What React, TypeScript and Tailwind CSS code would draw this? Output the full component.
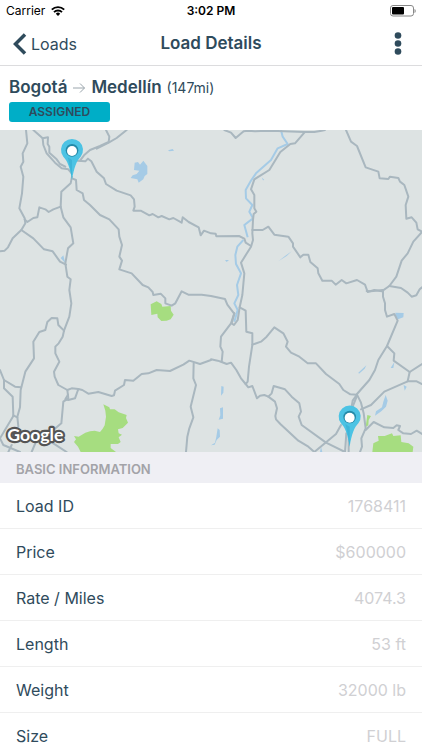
import { useState } from "react";

type Detail = { label: string; value: string };

const details: Detail[] = [
  { label: "Load ID", value: "1768411" },
  { label: "Price", value: "$600000" },
  { label: "Rate / Miles", value: "4074.3" },
  { label: "Length", value: "53 ft" },
  { label: "Weight", value: "32000 lb" },
  { label: "Size", value: "FULL" },
];

const roads = [
  "78,0 82,40 68,70 70,95 62,110 70,140 66,190 58,235 74,265 76,280 64,300 38,325 24,352 14,362 0,364",
  "100,0 128,25 130,45 140,70 165,98 185,115 205,118 215,130",
  "128,25 144,22 143,42 148,50 148,68 170,88 180,102 196,110",
  "318,0 328,20 326,36 300,48 270,60 252,76 240,92",
  "380,0 350,24 326,38 290,56",
  "232,92 256,94 264,86 274,94 290,125 312,145 318,162 350,182 392,196 402,208 404,230 400,242 422,242 448,256 458,252 475,262 485,258 508,268 520,264 545,278 548,262 566,276 596,292 602,316 612,302 633,310 647,311 649,319 717,318 733,326 737,338 753,348",
  "216,140 212,160 184,185 182,230 190,262 212,292 220,340 204,355 196,400 202,440 212,448 208,480 214,520 208,560 192,602",
  "218,146 228,150 230,180 248,190 252,210 270,225 300,255 328,268 356,298 358,320 366,345 358,380 366,392 358,418 395,430 428,465 445,472 458,486 460,495 482,491 496,505 496,520 515,527 526,520 545,484 565,494 605,494 633,498 675,507 682,524 702,550",
  "74,268 82,276 100,264 112,262 118,232 136,238 146,246 160,238 182,230",
  "64,300 100,325 132,358 158,364 180,395 198,404",
  "673,0 693,8 707,24 731,4 745,2 765,4 800,2 833,3 913,6 943,6 965,2 975,0",
  "913,8 885,40 871,42 841,66 808,120 763,148 753,178 763,195 763,235 769,245 761,252 759,270 757,310 759,330 753,350 723,398 733,430 727,495 719,532 737,542 739,605 757,610 757,645 747,710 743,755 737,762",
  "719,532 713,570 702,585 695,580 703,550",
  "703,550 693,580 663,620 661,650 668,665 665,696",
  "757,300 788,300 805,290 823,314 865,320 879,340 879,350 901,382 910,374 925,374 931,396 953,415 955,430 967,452 995,452 1007,464 1025,450 1039,460 1071,450 1095,464 1103,486 1123,480 1145,484 1168,468 1189,440 1205,392 1223,370 1240,335 1266,306",
  "1038,0 1053,35 1071,48 1097,112 1135,125 1139,145 1165,147 1170,140 1195,144 1200,155 1213,165 1225,200 1217,225 1219,266 1235,262 1249,278 1253,298 1266,305",
  "1168,468 1203,474 1223,488 1235,500 1249,496 1259,478 1266,472",
  "1100,483 1112,484 1149,480 1149,500 1155,520 1155,540 1161,560 1183,552 1193,572 1161,648 1135,690 1125,720 1108,750 1071,792",
  "1161,648 1183,670 1181,692 1229,726 1223,754",
  "1229,726 1266,702",
  "1266,762 1250,754 1223,754 1153,785 1113,825 1083,838",
  "757,644 783,635 800,620 823,592 850,610 863,635 858,650 873,668 898,680 923,700 948,700 978,732 1018,762 1030,780 1051,793 1071,794 1083,818 1091,850 1097,895 1084,925 1086,950 1080,966",
  "1071,794 1058,812 1054,835",
  "1070,800 1058,830",
  "1097,900 1121,876 1153,892 1180,894 1190,886 1200,888 1195,900 1210,910 1233,912 1250,902 1266,912",
  "633,688 653,692 665,696 680,702 693,698 709,720 723,745 737,762 745,772 757,768 771,805 780,797 793,795 805,800 815,790 821,768 855,778 875,800 898,820 903,845 896,860 905,885 978,938 1035,966",
  "805,800 825,815 831,835 826,858 828,868 841,882 895,932 925,950 943,966",
  "943,966 1008,912 1023,885",
  "1039,910 1035,966",
  "1046,920 1046,966",
  "192,602 188,620 176,640 166,650 166,670 178,695 162,725 164,740 175,765 202,780 215,775 235,777 247,780 265,791 295,786 335,798 342,796 345,782 372,765 375,750 400,752 425,732 445,730 470,720 510,723 550,704 568,692 600,702 633,690",
  "192,602 175,585 172,565 155,564 142,576 136,600 118,606 100,635 102,685 76,725 62,780 60,832 52,860 55,890",
  "0,720 12,750 45,770 62,772",
  "12,750 12,775 38,800 40,858 18,895 0,925 10,945 60,966",
  "40,856 52,862",
  "202,780 205,805 190,815 184,880 160,900 110,930 95,966",
  "235,777 225,805 205,810 196,808 204,794",
  "160,940 200,966",
  "581,700 580,745 588,765 572,830 580,862 568,895 562,920 558,966",
  "35,945 25,966",
];

const rivers = [
  "843,0 848,20 863,42 833,55 813,90 768,130 751,155 737,180 738,205 757,225 748,245 759,265 733,285 743,322",
  "730,330 712,350 706,375 708,402 723,430 711,465 715,495 703,520 713,540 703,575",
];

const lakes = [
  "404,98 414,96 420,104 430,92 442,108 442,132 434,138 430,148 416,158 412,148 392,144 398,136 410,132 418,122 402,120",
  "504,61 518,57 522,62 508,64",
  "835,394 855,378 875,364 860,378",
  "675,390 687,390 680,396",
  "785,142 793,150 789,151",
  "1186,548 1211,549 1210,562 1194,568 1188,561",
  "1075,728 1099,706 1094,716 1077,731",
  "1172,714 1183,696 1180,714",
  "1157,795 1163,812 1158,830 1144,844 1125,857 1128,844 1146,832 1150,815",
  "1211,765 1220,770 1214,782",
  "664,768 671,770 670,788 663,797",
  "660,835 669,832 669,866 656,869 661,856",
  "653,895 659,900 660,920 650,930 644,944 633,946 645,938 649,920",
  "963,950 967,966 960,966",
  "182,384 190,376 196,400",
];

const parks = [
  "452,523 470,514 484,522 487,530 512,528 513,542 521,554 512,568 500,572 484,573 473,562 472,551 454,555",
  "310,823 328,832 330,838 344,838 356,847 380,855 378,864 384,878 368,894 354,898 356,910 366,914 356,922 362,936 354,942 332,942 332,954 348,966 242,966 234,950 222,936 228,928 222,918 236,920 256,908 270,904 284,902 300,906 308,896 314,886 318,860 316,842",
  "1102,855 1113,858 1106,870 1105,886 1097,891",
  "1117,966 1120,940 1136,932 1134,918 1154,918 1164,914 1176,910 1180,918 1202,916 1204,936 1226,940 1240,950 1238,966",
];

function Pin({ x, y }: { x: number; y: number }) {
  return (
    <g transform={`translate(${x} ${y})`}>
      <path d="M0 88C-6 50-14 30-26 18A33 33 0 1 1 26 18C14 30 6 50 0 88Z" fill="#4cc3e4" />
      <path d="M0 88C-4 60-8 38-13 20L0 28Z" fill="#36acd0" opacity=".6" />
      <circle r="19" cy="-1" fill="#258aa8" />
      <circle r="15" cy="1" fill="#fff" />
    </g>
  );
}

function RouteMap() {
  return (
    <svg
      viewBox="0 0 1266 966"
      preserveAspectRatio="xMidYMid slice"
      className="block h-[322px] w-full bg-[#dde3e3]"
      role="img"
      aria-label="Route map"
    >
      <g fill="#a6dd80">
        {parks.map((p) => (
          <polygon key={p} points={p} />
        ))}
      </g>
      <g fill="#a5cbe6">
        {lakes.map((p) => (
          <polygon key={p} points={p} />
        ))}
      </g>
      <g fill="none" stroke="#a5cbe6" strokeWidth="6" strokeLinejoin="round">
        {rivers.map((p) => (
          <polyline key={p} points={p} />
        ))}
      </g>
      <g fill="none" stroke="#a9b7bf" strokeWidth="6" strokeLinejoin="round" strokeLinecap="round">
        {roads.map((p) => (
          <polyline key={p} points={p} />
        ))}
      </g>
      <Pin x={216} y={62} />
      <Pin x={1049} y={862} />
      <text
        x="22"
        y="934"
        fontSize="53"
        fontWeight="700"
        fill="#fff"
        stroke="#555"
        strokeWidth="13"
        strokeLinejoin="round"
        paintOrder="stroke"
        className="font-['Lato',sans-serif]"
      >
        Google
      </text>
    </svg>
  );
}

function StatusBar() {
  return (
    <div className="grid h-5 grid-cols-3 items-center px-1.5 pt-0.5 text-xs text-black">
      <div className="flex items-center gap-1.5">
        <span>Carrier</span>
        <svg viewBox="0 0 14 10" className="h-2.5 w-3.5" aria-hidden="true">
          <g fill="none" stroke="#000" strokeWidth="1.9">
            <path d="M.8 3.7a8.8 8.8 0 0 1 12.4 0" />
            <path d="M3 6.1a5.7 5.7 0 0 1 8 0" />
          </g>
          <path d="M7 10 4.8 7.7a3.1 3.1 0 0 1 4.4 0Z" />
        </svg>
      </div>
      <span className="text-center font-semibold">3:02 PM</span>
      <svg viewBox="0 0 27 12" className="h-3 w-[27px] justify-self-end" aria-hidden="true">
        <rect x="1.5" y=".5" width="23" height="10.5" rx="2.5" fill="none" stroke="#888" />
        <rect x="3" y="2" width="12" height="7.5" rx="1" />
        <path d="M25.500 4v4c1.600-.6 1.600-3.400 0-4Z" fill="#888" />
      </svg>
    </div>
  );
}

export default function App() {
  const [menuOpen, setMenuOpen] = useState(false);

  return (
    <div className="flex h-dvh flex-col overflow-hidden bg-white font-['Inter',sans-serif] text-[#2f4b5c]">
      <StatusBar />
      <header className="grid h-[46px] shrink-0 grid-cols-[1fr_auto_1fr] items-center border-b border-[#dcdcde] px-3 pt-0.5">
        <button className="flex cursor-pointer items-center gap-1 justify-self-start text-base">
          <svg viewBox="0 0 15 22" className="h-[22px] w-[15px]" aria-hidden="true">
            <path d="M13 1.500 3.500 11l9.500 9.500" fill="none" stroke="currentColor" strokeWidth="3.500" />
          </svg>
          Loads
        </button>
        <h1 className="text-[17px] font-semibold">Load Details</h1>
        <button
          aria-label="More options"
          aria-expanded={menuOpen}
          onClick={() => setMenuOpen(!menuOpen)}
          className="cursor-pointer justify-self-end px-2"
        >
          <svg viewBox="0 0 8 24" className="h-6 w-2" fill="currentColor" aria-hidden="true">
            <circle cx="4" cy="3.5" r="3.3" />
            <circle cx="4" cy="11.5" r="3.3" />
            <circle cx="4" cy="19.5" r="3.3" />
          </svg>
        </button>
      </header>

      <main className="flex-1 overflow-y-auto [scrollbar-width:none]">
        <section className="px-[9px] pt-2.5 pb-2">
          <h2 className="flex h-6 items-center gap-[5px] text-[17px] font-semibold">
            Bogotá
            <svg viewBox="0 0 14 12" className="h-3 w-3.5" aria-label="to">
              <path d="M1 6h11.500M8 1.500 12.500 6 8 10.500" fill="none" stroke="#9aa5ac" />
            </svg>
            Medellín
            <span className="text-sm font-normal">(147mi)</span>
          </h2>
          <div className="mt-0.5 flex h-5 w-[101px] items-center justify-center rounded-[3px] bg-[#00aec7] text-xs font-semibold">
            ASSIGNED
          </div>
        </section>

        <RouteMap />

        <section>
          <h3 className="flex h-[31px] items-center bg-[#efeff4] px-4 pt-1 text-[13px] font-semibold text-[#a3a3a8]">
            BASIC INFORMATION
          </h3>
          <dl>
            {details.map((d) => (
              <div
                key={d.label}
                className="flex h-[46px] items-center justify-between border-b border-[#efefef] px-4 text-base"
              >
                <dt>{d.label}</dt>
                <dd className="text-[#d0d0d3]">{d.value}</dd>
              </div>
            ))}
          </dl>
        </section>
      </main>
    </div>
  );
}
